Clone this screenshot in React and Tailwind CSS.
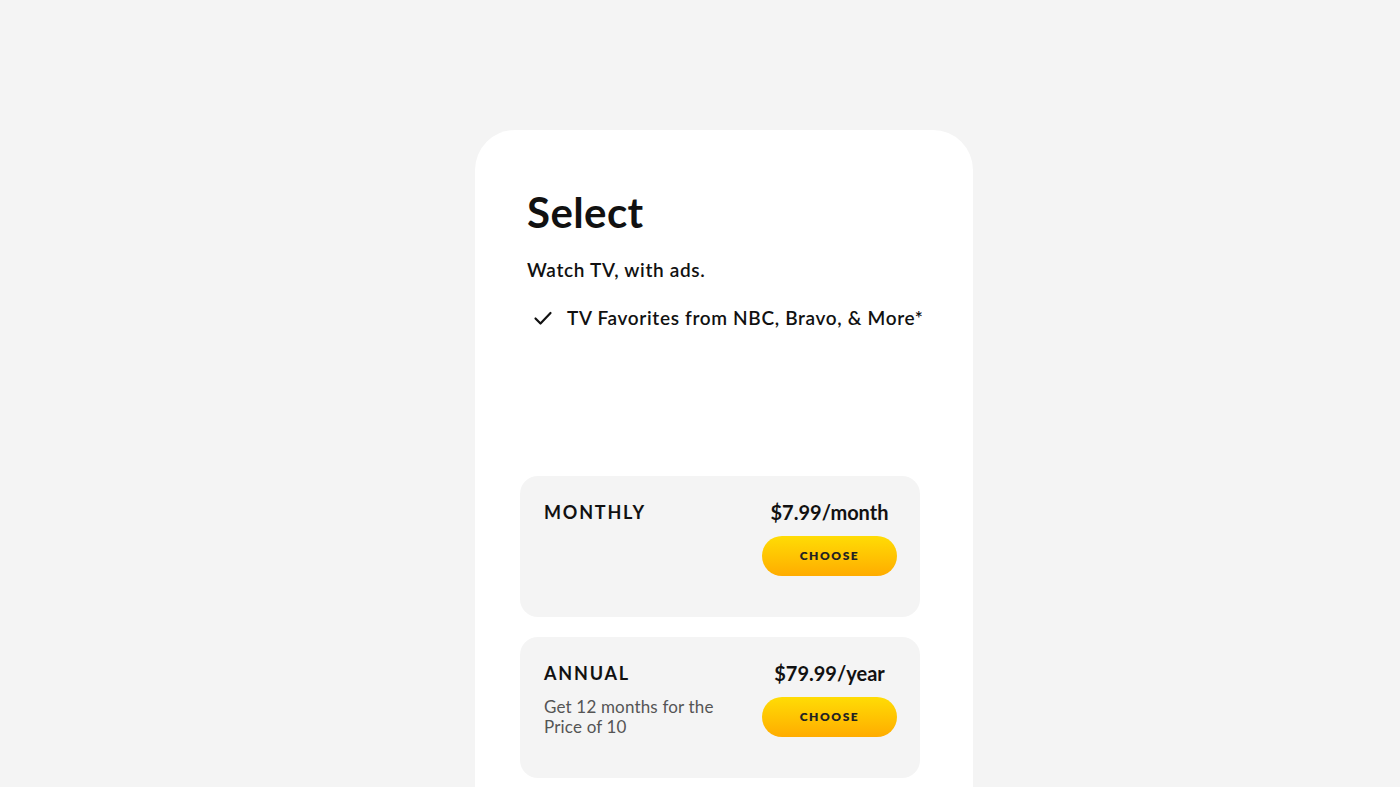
import React from 'react';

const plans = [
    {id: 'monthly', name: 'MONTHLY', price: '$7.99/month', note: null},
    {id: 'annual', name: 'ANNUAL', price: '$79.99/year', note: ['Get 12 months for the', 'Price of 10']},
];

function Check() {
    return <svg width="20" height="20" viewBox="0 0 20 20" fill="none" className="shrink-0">
        <path d="M2.5 10.5 L7.5 15.5 L17.5 5" stroke="#111" strokeWidth="2.2" strokeLinecap="round" strokeLinejoin="round"/>
    </svg>;
}

function PlanRow({plan}) {
    return <div className="flex justify-between rounded-[18px] bg-[#f4f4f4] pl-6 pr-[23px] pt-6 h-[141px]">
        <div className="flex flex-col">
            <div className="text-[18px] font-bold tracking-[0.1em] leading-[24px] text-[#111]">{plan.name}</div>
            {plan.note && <div className="mt-3 text-[17px] leading-[20px] text-[#555] tracking-[0.01em]">
                {plan.note.map(line => <div key={line}>{line}</div>)}
            </div>}
        </div>
        <div className="flex flex-col items-center w-[135px]">
            <div className="text-[20px] font-bold leading-[24px] text-[#111] whitespace-nowrap">{plan.price}</div>
            <button type="button" className="mt-3 h-10 w-[135px] rounded-full bg-gradient-to-b from-[#ffdc05] to-[#ffac00] text-[12px] font-extrabold tracking-[0.13em] text-[#222]">CHOOSE</button>
        </div>
    </div>;
}

export default function App() {
    return <div className="min-h-[787px] h-[787px] overflow-hidden bg-[#f4f4f4] pl-[475px] pt-[130px]" style={{fontFamily: 'Lato, "Noto Sans", sans-serif'}}>
        <div className="w-[498px] h-[700px] rounded-[40px] bg-white pt-[58px]">
            <div className="pl-[52px]">
                <h1 className="text-[42px] font-bold leading-[48px] tracking-[0.01em] text-[#111]">Select</h1>
                <p className="mt-[22px] text-[19px] font-semibold text-[#111] leading-[24px] tracking-[0.035em]">Watch TV, with ads.</p>
                <div className="mt-[24px] flex items-center gap-[14px] pl-[6px]">
                    <Check/>
                    <span className="text-[19px] font-semibold text-[#111] leading-[24px] tracking-[0.035em] whitespace-nowrap">TV Favorites from NBC, Bravo, &amp; More*</span>
                </div>
            </div>
            <div className="mt-[146px] ml-[45px] w-[400px] flex flex-col gap-5">
                {plans.map(plan => <PlanRow key={plan.id} plan={plan}/>)}
            </div>
        </div>
    </div>;
}
